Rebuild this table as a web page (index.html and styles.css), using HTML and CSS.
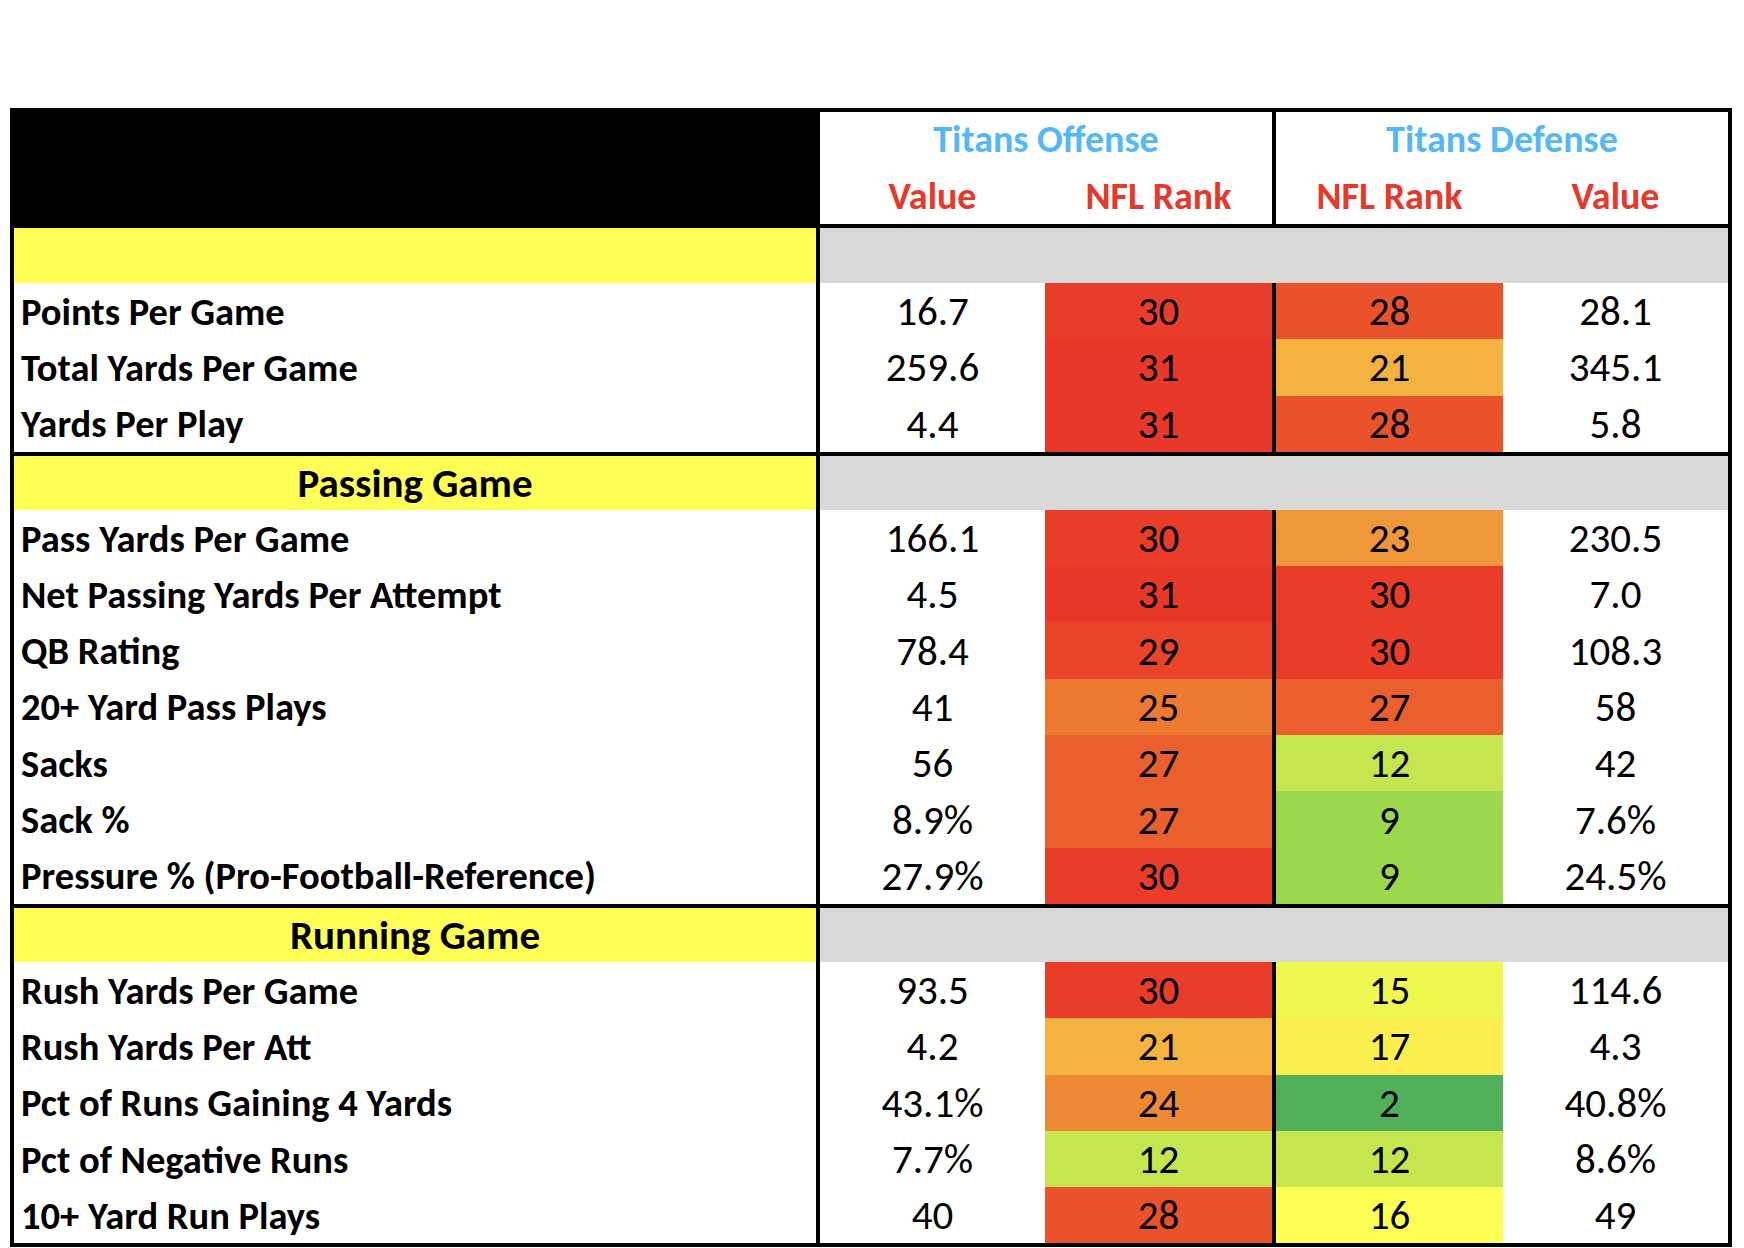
FILE: index.html
```html
<!DOCTYPE html>
<html lang="en">
<head>
<meta charset="utf-8">
<title>Titans Offense vs Defense</title>
<link rel="stylesheet" href="styles.css">
</head>
<body>
<div class="sheet">
  <div class="head">
    <div class="head-blank"></div>
    <div class="head-group">
      <div class="group-title">Titans Offense</div>
      <div class="group-cols"><span>Value</span><span>NFL Rank</span></div>
    </div>
    <div class="head-group head-def">
      <div class="group-title">Titans Defense</div>
      <div class="group-cols"><span>NFL Rank</span><span>Value</span></div>
    </div>
  </div>

  <div class="section first"><div class="sec-label"></div><div class="sec-fill"></div></div>
  <div class="row"><div class="label">Points Per Game</div><div class="val">16.7</div><div class="rank r30 split">30</div><div class="rank r28">28</div><div class="val">28.1</div></div>
  <div class="row"><div class="label">Total Yards Per Game</div><div class="val">259.6</div><div class="rank r31 split">31</div><div class="rank r21">21</div><div class="val">345.1</div></div>
  <div class="row"><div class="label">Yards Per Play</div><div class="val">4.4</div><div class="rank r31 split">31</div><div class="rank r28">28</div><div class="val">5.8</div></div>

  <div class="section"><div class="sec-label">Passing Game</div><div class="sec-fill"></div></div>
  <div class="row"><div class="label">Pass Yards Per Game</div><div class="val">166.1</div><div class="rank r30 split">30</div><div class="rank r23">23</div><div class="val">230.5</div></div>
  <div class="row"><div class="label">Net Passing Yards Per Attempt</div><div class="val">4.5</div><div class="rank r31 split">31</div><div class="rank r30">30</div><div class="val">7.0</div></div>
  <div class="row"><div class="label">QB Rating</div><div class="val">78.4</div><div class="rank r29 split">29</div><div class="rank r30">30</div><div class="val">108.3</div></div>
  <div class="row"><div class="label">20+ Yard Pass Plays</div><div class="val">41</div><div class="rank r25 split">25</div><div class="rank r27">27</div><div class="val">58</div></div>
  <div class="row"><div class="label">Sacks</div><div class="val">56</div><div class="rank r27 split">27</div><div class="rank r12">12</div><div class="val">42</div></div>
  <div class="row"><div class="label">Sack %</div><div class="val">8.9%</div><div class="rank r27 split">27</div><div class="rank r9">9</div><div class="val">7.6%</div></div>
  <div class="row"><div class="label">Pressure % (Pro-Football-Reference)</div><div class="val">27.9%</div><div class="rank r30 split">30</div><div class="rank r9">9</div><div class="val">24.5%</div></div>

  <div class="section"><div class="sec-label">Running Game</div><div class="sec-fill"></div></div>
  <div class="row"><div class="label">Rush Yards Per Game</div><div class="val">93.5</div><div class="rank r30 split">30</div><div class="rank r15">15</div><div class="val">114.6</div></div>
  <div class="row"><div class="label">Rush Yards Per Att</div><div class="val">4.2</div><div class="rank r21 split">21</div><div class="rank r17">17</div><div class="val">4.3</div></div>
  <div class="row"><div class="label">Pct of Runs Gaining 4 Yards</div><div class="val">43.1%</div><div class="rank r24 split">24</div><div class="rank r2">2</div><div class="val">40.8%</div></div>
  <div class="row"><div class="label">Pct of Negative Runs</div><div class="val">7.7%</div><div class="rank r12 split">12</div><div class="rank r12">12</div><div class="val">8.6%</div></div>
  <div class="row"><div class="label">10+ Yard Run Plays</div><div class="val">40</div><div class="rank r28 split">28</div><div class="rank r16">16</div><div class="val">49</div></div>
</div>
</body>
</html>
```

FILE: styles.css
```css
html, body {
  margin: 0;
  padding: 0;
  background: #ffffff;
}

body {
  font-family: Carlito, Calibri, Lato, "Liberation Sans", sans-serif;
  color: #000000;
}

.sheet {
  box-sizing: border-box;
  width: 1722px;
  margin: 108px 0 0 10px;
  border: 4px solid #000000;
}

/* header */
.head {
  display: grid;
  grid-template-columns: 806px 452px 456px;
  height: 112px;
  border-bottom: 4px solid #000000;
}

.head-blank {
  background: #000000;
}

.head-group {
  display: flex;
  flex-direction: column;
}

.head-def {
  border-left: 4px solid #000000;
}

.group-title {
  height: 56px;
  display: flex;
  align-items: center;
  justify-content: center;
  color: #55b8f6;
  font-weight: 700;
  font-size: 38px;
  padding-bottom: 2px;
  box-sizing: border-box;
}

.group-cols {
  height: 56px;
  display: grid;
  grid-template-columns: 1fr 1fr;
  align-items: center;
  color: #e8382a;
  font-weight: 700;
  font-size: 38px;
}

.group-cols span {
  text-align: center;
}

.head .group-cols {
  grid-template-columns: 225px 227px;
}

.head-def .group-cols {
  grid-template-columns: 227px 225px;
}

/* sections */
.section {
  display: grid;
  grid-template-columns: 806px 908px;
  height: 54px;
  border-top: 4px solid #000000;
}

.section.first {
  border-top: none;
  height: 55px;
}

.sec-label {
  background: #ffff55;
  border-right: 4px solid #000000;
  display: flex;
  align-items: center;
  justify-content: center;
  font-weight: 700;
  font-size: 41px;
  padding-top: 1px;
  box-sizing: border-box;
}

.sec-fill {
  background: #d9d9d9;
}

/* data rows */
.row {
  display: grid;
  grid-template-columns: 806px 225px 231px 227px 225px;
  height: 56.3px;
}

.label {
  box-sizing: border-box;
  border-right: 4px solid #000000;
  display: flex;
  align-items: center;
  padding-left: 7px;
  padding-top: 0;
  font-weight: 700;
  font-size: 38.5px;
  white-space: nowrap;
}

.val,
.rank {
  display: flex;
  align-items: center;
  justify-content: center;
  font-size: 41px;
  padding-top: 0;
  box-sizing: border-box;
}

.split {
  border-right: 4px solid #000000;
}

.r31 { background: #e8382a; }
.r30 { background: #e93d29; }
.r29 { background: #ea4428; }
.r28 { background: #e9522b; }
.r27 { background: #eb5e2d; }
.r25 { background: #ee7a31; }
.r24 { background: #ef8a34; }
.r23 { background: #f0973a; }
.r21 { background: #f4b340; }
.r17 { background: #fcee4f; }
.r16 { background: #ffff55; }
.r15 { background: #eef851; }
.r12 { background: #c6e64f; }
.r9 { background: #9cd84c; }
.r2 { background: #52b05a; }
```
